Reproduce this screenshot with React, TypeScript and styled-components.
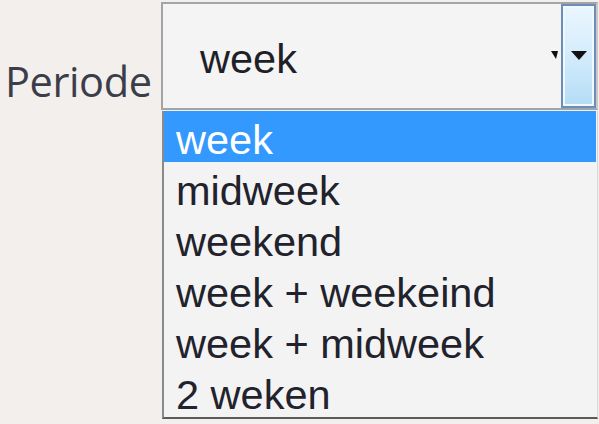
import React from "react";
import styled, { createGlobalStyle } from "styled-components";

const Global = createGlobalStyle`
  html, body {
    margin: 0;
    padding: 0;
    background: #f2efed;
  }
  body {
    width: 599px;
    height: 424px;
    overflow: hidden;
  }
`;

const Page = styled.div`
  display: flex;
  align-items: flex-start;
  width: 599px;
  height: 424px;
`;

const Label = styled.div`
  width: 161px;
  box-sizing: border-box;
  padding: 53px 0 0 5px;
  font-family: "Open Sans", "DejaVu Sans", sans-serif;
  font-size: 41.5px;
  line-height: 56px;
  color: #3b3d48;
  letter-spacing: -0.4px;
`;

const Column = styled.div`
  display: flex;
  flex-direction: column;
  width: 437px;
  padding-top: 2px;
`;

const Select = styled.div`
  display: flex;
  align-items: center;
  height: 108px;
  box-sizing: border-box;
  border: 2px solid #a4a4a4;
  border-right-color: #c9c9c9;
  background: #f4f4f4;
  font-family: "Liberation Sans", Arial, sans-serif;
  font-size: 41.5px;
  color: #1f1f28;
  padding-left: 37px;
`;

const Value = styled.span`
  flex: 1;
  margin-top: 6px;
`;

const SmallArrow = styled.span`
  width: 0;
  height: 0;
  border-left: 5px solid transparent;
  border-right: 2px solid transparent;
  border-top: 8px solid #111;
  margin-right: 3px;
  margin-top: -2px;
`;

const Button = styled.div`
  display: flex;
  align-items: center;
  justify-content: center;
  align-self: stretch;
  width: 35px;
  box-sizing: border-box;
  border: 2px solid #6d8eb2;
  box-shadow: inset 0 0 0 2px #eef8ff;
  background: linear-gradient(to bottom, #eaf6fe 0%, #d6edfc 45%, #b4dcf6 100%);
`;

const Arrow = styled.span`
  width: 0;
  height: 0;
  border-left: 8px solid transparent;
  border-right: 8px solid transparent;
  border-top: 9px solid #111;
  margin-top: -2px;
`;

const List = styled.div`
  margin-top: 1px;
  margin-left: 1px;
  width: 436px;
  box-sizing: border-box;
  border-left: 2px solid #8a8a8a;
  border-bottom: 2px solid #5a5a5a;
  border-right: 1px solid #d8d8d8;
  background: #f3f3f3;
`;

const Option = styled.div<{ $active?: boolean }>`
  height: 51px;
  line-height: 57px;
  padding-left: 12px;
  font-family: "Liberation Sans", Arial, sans-serif;
  font-size: 41.5px;
  background: ${(p) => (p.$active ? "#3399ff" : "transparent")};
  color: ${(p) => (p.$active ? "#ffffff" : "#22222c")};
  margin-right: ${(p) => (p.$active ? "1px" : "0")};
  white-space: nowrap;
`;

const options = ["week", "midweek", "weekend", "week + weekeind", "week + midweek", "2 weken"];

export default function App() {
  return (
    <>
      <Global />
      <Page>
        <Label>Periode</Label>
        <Column>
          <Select>
            <Value>week</Value>
            <SmallArrow />
            <Button>
              <Arrow />
            </Button>
          </Select>
          <List>
            {options.map((o, i) => (
              <Option key={o} $active={i === 0}>
                {o}
              </Option>
            ))}
          </List>
        </Column>
      </Page>
    </>
  );
}
